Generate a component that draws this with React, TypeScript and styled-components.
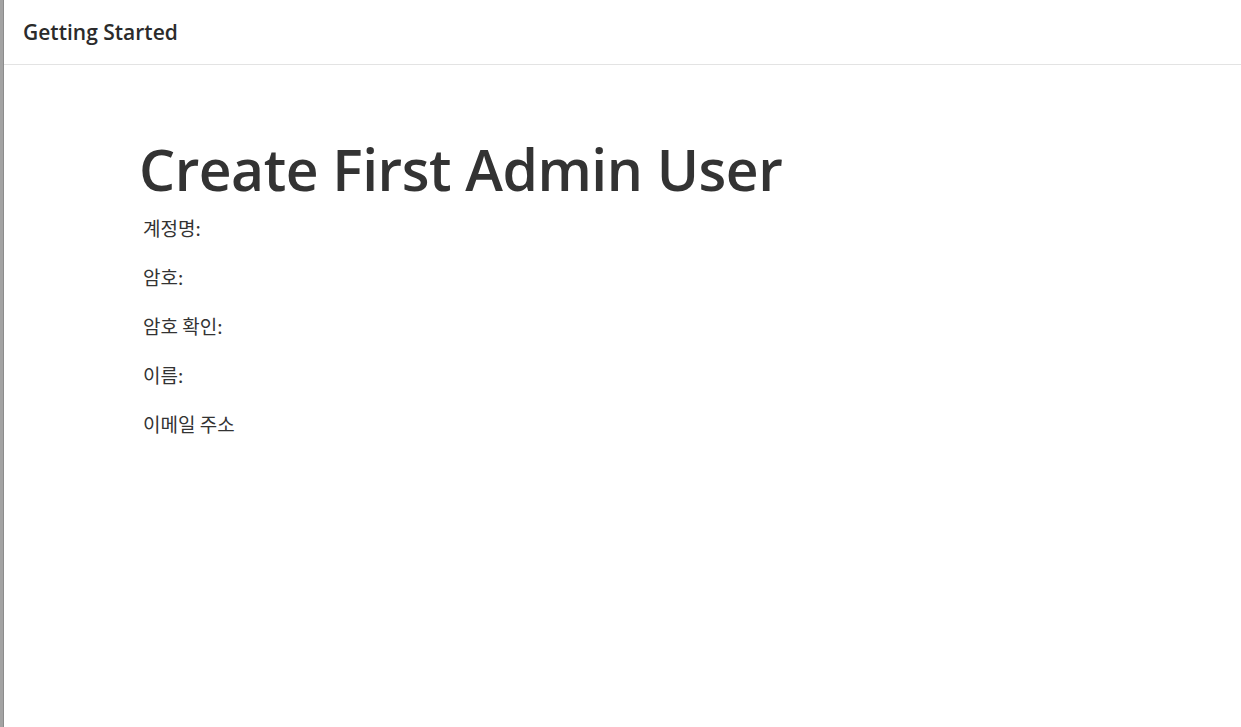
import styled, { createGlobalStyle } from "styled-components";

const GlobalStyle = createGlobalStyle`
  html, body {
    margin: 0;
    padding: 0;
    background: #ffffff;
  }
  body {
    font-family: "Open Sans", "Noto Sans", "Noto Sans CJK KR", sans-serif;
    color: #333333;
  }
`;

const Frame = styled.div`
  display: flex;
  height: 100vh;
  width: 100vw;
  overflow: hidden;
`;

const SideEdge = styled.div`
  width: 3px;
  flex-shrink: 0;
  background: #a3a3a3;
  border-right: 1px solid #8c8c8c;
`;

const Main = styled.div`
  flex: 1;
  display: flex;
  flex-direction: column;
`;

const Header = styled.div`
  height: 65px;
  box-sizing: border-box;
  border-bottom: 1px solid #e3e3e3;
  display: flex;
  align-items: center;
  padding: 0 0 0 19px;
  font-size: 21px;
  font-weight: 600;
  color: #2b2b2b;
`;

const Content = styled.div`
  padding: 71px 0 0 135px;
`;

const Title = styled.h1`
  margin: 0;
  font-size: 57px;
  font-weight: 600;
  line-height: 67px;
  letter-spacing: -0.5px;
  color: #333333;
`;

const Label = styled.p`
  margin: 0 0 0 4px;
  font-family: "Noto Sans CJK KR", sans-serif;
  font-size: 19px;
  font-weight: 400;
  line-height: 49px;
  color: #333333;
`;

const labels = ["계정명:", "암호:", "암호 확인:", "이름:", "이메일 주소"];

export default function App() {
  return (
    <Frame>
      <GlobalStyle />
      <SideEdge />
      <Main>
        <Header>Getting Started</Header>
        <Content>
          <Title>Create First Admin User</Title>
          {labels.map((l) => (
            <Label key={l}>{l}</Label>
          ))}
        </Content>
      </Main>
    </Frame>
  );
}
